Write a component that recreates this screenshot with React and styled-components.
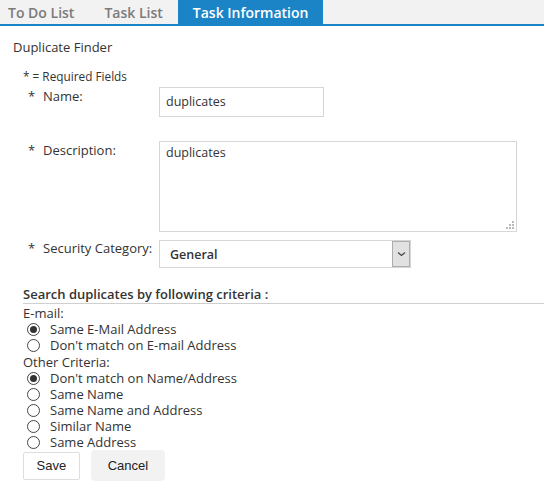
import styled, { createGlobalStyle } from "styled-components";

const GlobalStyle = createGlobalStyle`
  html, body {
    margin: 0;
    padding: 0;
    background: #fff;
    font-family: "Open Sans", "Noto Sans", sans-serif;
    color: #333;
  }
`;

const TabBar = styled.div`
  display: flex;
  height: 24px;
  background: #f2f2f2;
  border-bottom: 2px solid #1b84c7;
`;

const Tab = styled.div`
  display: flex;
  align-items: center;
  padding: 0 15px 0 ${p => (p.$first ? "8px" : "15px")};
  font-size: 14px;
  font-weight: 600;
  color: ${p => (p.$active ? "#fff" : "#7b7b7b")};
  background: ${p => (p.$active ? "#1b84c7" : "transparent")};
`;

const Body = styled.div`
  padding: 12px 0 0 13px;
`;

const Title = styled.div`
  font-size: 13px;
  line-height: 18px;
`;

const Form = styled.div`
  padding: 12px 0 0 10px;
`;

const Note = styled.div`
  font-size: 11.8px;
  line-height: 16px;
`;

const Row = styled.div`
  display: flex;
  align-items: flex-start;
  margin-top: ${p => p.$top || "0px"};
`;

const Label = styled.div`
  width: 136px;
  font-size: 13px;
  line-height: 18px;
  padding-left: 5px;
  box-sizing: border-box;
`;

const Star = styled.span`
  display: inline-block;
  width: 15px;
`;

const TextInput = styled.div`
  box-sizing: border-box;
  width: ${p => p.$w};
  height: ${p => p.$h};
  border: 1px solid #d6d6d6;
  padding: ${p => p.$pad || "5px 6px"};
  font-size: 12.5px;
  line-height: 18px;
  position: relative;
`;

const Grip = styled.svg`
  position: absolute;
  right: 2px;
  bottom: 2px;
`;

const Select = styled.div`
  box-sizing: border-box;
  width: 252px;
  height: 28px;
  margin-top: 1px;
  border: 1px solid #d6d6d6;
  display: flex;
  align-items: stretch;
`;

const SelectValue = styled.div`
  flex: 1;
  display: flex;
  align-items: center;
  padding-left: 10px;
  font-size: 12.5px;
  font-weight: 600;
`;

const SelectButton = styled.div`
  width: 16px;
  background: #e1e1e1;
  border: 1px solid #adadad;
  display: flex;
  align-items: center;
  justify-content: center;
`;

const SectionHead = styled.div`
  margin-top: 18px;
  font-size: 13px;
  font-weight: 600;
  line-height: 17px;
  border-bottom: 1px solid #cfcfcf;
`;

const GroupLabel = styled.div`
  font-size: 13px;
  line-height: 16px;
  margin-top: 1px;
`;

const Radio = styled.div`
  display: flex;
  align-items: center;
  height: 16px;
  font-size: 13px;
  line-height: 16px;
  padding-left: 4px;
`;

const Circle = styled.span`
  box-sizing: border-box;
  width: 13px;
  height: 13px;
  border-radius: 50%;
  border: 1px solid #444;
  margin-right: 10px;
  display: flex;
  align-items: center;
  justify-content: center;
  &::after {
    content: "";
    display: ${p => (p.$on ? "block" : "none")};
    width: 7px;
    height: 7px;
    border-radius: 50%;
    background: #333;
  }
`;

const Buttons = styled.div`
  display: flex;
  align-items: center;
  gap: 11px;
`;

const Button = styled.button`
  font-family: "Liberation Sans", Arial, sans-serif;
  font-size: 13px;
  color: #222;
  box-sizing: border-box;
  height: ${p => (p.$soft ? "31px" : "28px")};
  padding: 0 ${p => (p.$soft ? "16px" : "12.5px")};
  background: ${p => (p.$soft ? "#f2f2f2" : "#fff")};
  border: 1px solid ${p => (p.$soft ? "#f2f2f2" : "#dedede")};
  border-radius: ${p => (p.$soft ? "4px" : "2px")};
`;

const emailOptions = [
  { label: "Same E-Mail Address", on: true },
  { label: "Don't match on E-mail Address" },
];

const otherOptions = [
  { label: "Don't match on Name/Address", on: true },
  { label: "Same Name" },
  { label: "Same Name and Address" },
  { label: "Similar Name" },
  { label: "Same Address" },
];

export default function App() {
  return (
    <>
      <GlobalStyle />
      <TabBar>
        <Tab $first>To Do List</Tab>
        <Tab>Task List</Tab>
        <Tab $active>Task Information</Tab>
      </TabBar>
      <Body>
        <Title>Duplicate Finder</Title>
        <Form>
          <Note>* = Required Fields</Note>
          <Row $top="3px">
            <Label><Star>*</Star>Name:</Label>
            <TextInput $w="165px" $h="30px">duplicates</TextInput>
          </Row>
          <Row $top="24px">
            <Label><Star>*</Star>Description:</Label>
            <TextInput $w="358px" $h="91px" $pad="2px 6px">
              duplicates
              <Grip width="8" height="8" viewBox="0 0 8 8">
                <rect x="6" y="0" width="2" height="2" fill="#bbb" />
                <rect x="3" y="3" width="2" height="2" fill="#bbb" />
                <rect x="6" y="3" width="2" height="2" fill="#bbb" />
                <rect x="0" y="6" width="2" height="2" fill="#bbb" />
                <rect x="3" y="6" width="2" height="2" fill="#bbb" />
                <rect x="6" y="6" width="2" height="2" fill="#bbb" />
              </Grip>
            </TextInput>
          </Row>
          <Row $top="7px">
            <Label><Star>*</Star>Security Category:</Label>
            <Select>
              <SelectValue>General</SelectValue>
              <SelectButton>
                <svg width="9" height="6" viewBox="0 0 9 6">
                  <path d="M1 1.5 L4.5 4.5 L8 1.5" fill="none" stroke="#444" strokeWidth="1.2" />
                </svg>
              </SelectButton>
            </Select>
          </Row>
          <SectionHead>Search duplicates by following criteria :</SectionHead>
          <GroupLabel>E-mail:</GroupLabel>
          {emailOptions.map(o => (
            <Radio key={o.label}><Circle $on={o.on} />{o.label}</Radio>
          ))}
          <GroupLabel>Other Criteria:</GroupLabel>
          {otherOptions.map(o => (
            <Radio key={o.label}><Circle $on={o.on} />{o.label}</Radio>
          ))}
          <Buttons>
            <Button>Save</Button>
            <Button $soft>Cancel</Button>
          </Buttons>
        </Form>
      </Body>
    </>
  );
}
